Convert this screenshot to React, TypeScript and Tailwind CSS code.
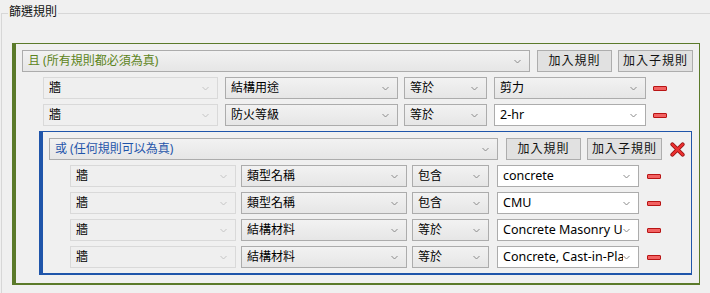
import React from "react";

const FONT = '"Segoe UI", "Noto Sans", "Noto Sans CJK TC", sans-serif';

function Chevron({ light }: { light?: boolean }) {
  return (
    <svg width="7" height="5" viewBox="0 0 7 5" className="shrink-0">
      <path d="M0.5 1 L3.5 4 L6.5 1" fill="none" stroke={light ? "#c4c4c4" : "#8a8a8a"} strokeWidth="1" />
    </svg>
  );
}

function Combo({
  text,
  w,
  kind,
  color,
}: {
  text: string;
  w: string;
  kind: "disabled" | "gray" | "white";
  color?: string;
}) {
  const cls =
    kind === "disabled"
      ? "border-[#d9d9d9] bg-[#efefef]"
      : kind === "white"
      ? "border-[#acacac] bg-white"
      : "border-[#acacac] bg-gradient-to-b from-[#f2f2f2] to-[#e6e6e6]";
  const size = kind === "white" ? "text-[12.5px]" : "text-[12px]";
  return (
    <div className={`${w} h-[22px] shrink-0 border ${cls} flex items-center pl-[5px] pr-[8px]`}>
      <span
        className={`flex-1 overflow-hidden whitespace-nowrap ${size} leading-[20px]`}
        style={{ color: color ?? "#000" }}
      >
        {text}
      </span>
      <Chevron light={kind === "disabled"} />
    </div>
  );
}

function Btn({ text }: { text: string }) {
  return (
    <div className="w-[75px] h-[22px] shrink-0 border border-[#adadad] bg-[#e1e1e1] flex items-center justify-center text-[12px] text-[#111] tracking-[1px]">
      {text}
    </div>
  );
}

function Minus() {
  return <div className="w-[14px] h-[5px] shrink-0 border border-[#b81414] bg-[#f26262] rounded-[1px]" />;
}

function RedX() {
  return (
    <svg width="15" height="15" viewBox="0 0 16 16" className="shrink-0">
      <path d="M2.5 2.5 L13.5 13.5 M13.5 2.5 L2.5 13.5" stroke="#8f1010" strokeWidth="4.2" strokeLinecap="round" />
      <path d="M2.5 2.5 L13.5 13.5 M13.5 2.5 L2.5 13.5" stroke="#ea3030" strokeWidth="2.6" strokeLinecap="round" />
    </svg>
  );
}

function OuterRow({ f2, f3, f4, white }: { f2: string; f3: string; f4: string; white?: boolean }) {
  return (
    <div className="flex items-center ml-[27px]">
      <Combo text="牆" w="w-[175px]" kind="disabled" />
      <div className="w-[7px]" />
      <Combo text={f2} w="w-[173px]" kind="gray" />
      <div className="w-[6px]" />
      <Combo text={f3} w="w-[83px]" kind="gray" />
      <div className="w-[7px]" />
      <Combo text={f4} w="w-[152px]" kind={white ? "white" : "gray"} />
      <div className="w-[7px]" />
      <Minus />
    </div>
  );
}

function InnerRow({ f2, f3, f4 }: { f2: string; f3: string; f4: string }) {
  return (
    <div className="flex items-center ml-[27px]">
      <Combo text="牆" w="w-[166px]" kind="disabled" />
      <div className="w-[5px]" />
      <Combo text={f2} w="w-[166px]" kind="gray" />
      <div className="w-[5px]" />
      <Combo text={f3} w="w-[77px]" kind="gray" />
      <div className="w-[8px]" />
      <Combo text={f4} w="w-[142px]" kind="white" />
      <div className="w-[8px]" />
      <Minus />
    </div>
  );
}

export default function App() {
  return (
    <div className="w-[710px] h-[293px] bg-[#f0f0f0] overflow-hidden relative" style={{ fontFamily: FONT }}>
      <div className="pt-[13px] pl-[1px]">
        <div className="border-t border-l border-[#d7d7d7] h-[300px] pt-[29px] pl-[10px]">
          {/* green group */}
          <div className="w-[688px] border-l-4 border-t border-r border-b-2 border-[#5b7a2a] pt-[6px] pb-[8px]">
            <div className="flex items-center pl-[6px]">
              <Combo text="且 (所有規則都必須為真)" w="w-[508px]" kind="gray" color="#5c8420" />
              <div className="w-[7px]" />
              <Btn text="加入規則" />
              <div className="w-[6px]" />
              <Btn text="加入子規則" />
            </div>
            <div className="h-[5px]" />
            <OuterRow f2="結構用途" f3="等於" f4="剪力" />
            <div className="h-[5px]" />
            <OuterRow f2="防火等級" f3="等於" f4="2-hr" white />
            <div className="h-[5px]" />
            {/* blue group */}
            <div className="ml-[23px] w-[653px] border-l-4 border-t border-r border-b-2 border-[#1f55aa] pt-[6px] pb-[5px]">
              <div className="flex items-center pl-[6px]">
                <Combo text="或 (任何規則可以為真)" w="w-[449px]" kind="gray" color="#1f55aa" />
                <div className="w-[8px]" />
                <Btn text="加入規則" />
                <div className="w-[6px]" />
                <Btn text="加入子規則" />
                <div className="w-[8px]" />
                <RedX />
              </div>
              <div className="h-[5px]" />
              <InnerRow f2="類型名稱" f3="包含" f4="concrete" />
              <div className="h-[5px]" />
              <InnerRow f2="類型名稱" f3="包含" f4="CMU" />
              <div className="h-[5px]" />
              <InnerRow f2="結構材料" f3="等於" f4="Concrete Masonry Units" />
              <div className="h-[5px]" />
              <InnerRow f2="結構材料" f3="等於" f4="Concrete, Cast-in-Place" />
            </div>
          </div>
        </div>
      </div>
      <div className="absolute left-[8px] top-[4px] px-[1px] bg-[#f0f0f0] text-[12px] leading-[16px] text-[#111]">
        篩選規則
      </div>
    </div>
  );
}
